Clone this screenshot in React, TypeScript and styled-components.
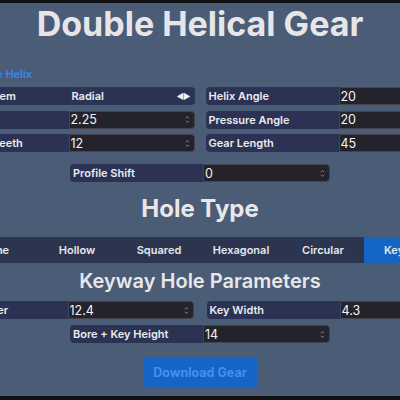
import React, { useState } from "react";
import styled, { createGlobalStyle } from "styled-components";

const GlobalStyle = createGlobalStyle`
    html, body {
        margin: 0;
        padding: 0;
        background: #111214;
    }
    * {
        box-sizing: border-box;
    }
`;

const Screen = styled.div`
    width: 400px;
    height: 400px;
    overflow: hidden;
    background: #111214;
    padding: 3px 0 4px;
`;

const Page = styled.main`
    height: 100%;
    background: #4b5c76;
    display: flex;
    flex-direction: column;
    align-items: center;
    font-family: Inter, "Noto Sans", sans-serif;
    color: #e8e8ea;
`;

const Title = styled.h1`
    margin: 4px 0 0;
    font-size: 34px;
    line-height: 1;
    font-weight: 700;
    color: #e6e6e8;
    white-space: nowrap;
`;

const Board = styled.div`
    width: 540px;
    display: flex;
    flex-direction: column;
    align-items: center;
`;

const ToggleRow = styled.div`
    align-self: stretch;
    margin-top: 21px;
    padding-left: 35px;
`;

const HelixToggle = styled.button`
    border: none;
    background: none;
    padding: 0;
    font-family: inherit;
    font-size: 11px;
    line-height: 14px;
    font-weight: 600;
    color: #3a86ea;
    cursor: pointer;
`;

// left pair carries a wider label; the right margin keeps the inputs on the page centre
const ParamGrid = styled.div<{ $gap: number; $top: number }>`
    margin: ${(p) => p.$top}px 5px 0 0;
    display: grid;
    grid-template-columns: 264px 259px;
    column-gap: ${(p) => p.$gap}px;
    row-gap: 5.5px;
`;

const Pair = styled.div<{ $top?: number }>`
    height: 18px;
    margin-top: ${(p) => p.$top ?? 0}px;
    display: grid;
    grid-template-columns: 133px minmax(0, 1fr);

    ${ParamGrid} > &:nth-child(odd) {
        grid-template-columns: 138px minmax(0, 1fr);
    }
`;

const SinglePair = styled(Pair)`
    width: 260px;
`;

const Label = styled.div`
    background: #2b3253;
    border-radius: 4px 0 0 4px;
    padding-left: 3px;
    font-size: 11px;
    font-weight: 600;
    line-height: 18px;
    color: #ececee;
    white-space: nowrap;
    overflow: hidden;
`;

const Field = styled.div`
    display: flex;
    align-items: center;
    min-width: 0;
    background: #24222b;
    border: 1px solid #44434f;
    border-radius: 0 4px 4px 0;
    padding: 0 4px 0 1px;
`;

const NumberInput = styled.input`
    flex: 1;
    width: 0;
    min-width: 0;
    border: none;
    outline: none;
    background: transparent;
    padding: 0;
    font-family: Inter, "Noto Sans", sans-serif;
    font-size: 12.5px;
    color: #f4f4f6;
`;

const SelectBox = styled.div`
    display: flex;
    align-items: center;
    justify-content: space-between;
    background: #2c3456;
    border-radius: 0 4px 4px 0;
    padding: 0 5px 0 3px;
    font-size: 11px;
    font-weight: 600;
    color: #ececee;
`;

const Arrows = styled.span`
    font-size: 8px;
    letter-spacing: -1px;
    color: #f0f0f2;
`;

const SectionTitle = styled.h2<{ $size: number; $weight: number; $top: number }>`
    margin: ${(p) => p.$top}px 0 0;
    font-size: ${(p) => p.$size}px;
    font-weight: ${(p) => p.$weight};
    line-height: 1;
    color: #e8e8ea;
    white-space: nowrap;
`;

const TabBar = styled.div`
    margin-top: 16px;
    width: 600px;
    height: 26px;
    background: #2c3550;
    display: flex;
    justify-content: center;
`;

const Tab = styled.button<{ $active: boolean }>`
    width: 82px;
    border: none;
    padding: 0;
    background: ${(p) => (p.$active ? "#1565c4" : "transparent")};
    font-family: inherit;
    font-size: 11px;
    font-weight: 600;
    color: #e6e7ea;
    cursor: pointer;
`;

const DownloadButton = styled.button`
    margin-top: 14px;
    width: 115px;
    height: 30px;
    border: none;
    border-radius: 4px;
    background: #1664c6;
    font-family: inherit;
    font-size: 12.5px;
    font-weight: 700;
    color: #4290f2;
    cursor: pointer;
`;

function Spinner() {
    return (
        <svg width="5" height="9" viewBox="0 0 5 9" fill="none" stroke="#8e8e96" strokeWidth="0.9">
            <path d="M1 3.2 L2.5 1.6 L4 3.2" />
            <path d="M1 5.8 L2.5 7.4 L4 5.8" />
        </svg>
    );
}

type FieldProps = { label: string; value: string };

function FieldBody({ label, value }: FieldProps) {
    const [val, setVal] = useState(value);
    return (
        <>
            <Label>{label}</Label>
            <Field>
                <NumberInput value={val} onChange={(e) => setVal(e.target.value)} />
                <Spinner />
            </Field>
        </>
    );
}

function NumberField(props: FieldProps) {
    return (
        <Pair>
            <FieldBody {...props} />
        </Pair>
    );
}

function CenteredField(props: FieldProps & { top: number }) {
    return (
        <SinglePair $top={props.top}>
            <FieldBody label={props.label} value={props.value} />
        </SinglePair>
    );
}

const HOLE_TYPES = ["None", "Hollow", "Squared", "Hexagonal", "Circular", "Keyway"];

export default function App() {
    const [doubleHelix, setDoubleHelix] = useState(true);
    const [holeType, setHoleType] = useState("Keyway");

    return (
        <>
            <GlobalStyle />
            <Screen>
                <Page>
                    <Title>Double Helical Gear</Title>
                    <Board>
                        <ToggleRow>
                            <HelixToggle onClick={() => setDoubleHelix(!doubleHelix)}>
                                {doubleHelix ? "Double Helix" : "Single Helix"}
                            </HelixToggle>
                        </ToggleRow>

                        <ParamGrid $gap={11} $top={5}>
                            <Pair>
                                <Label>Module System</Label>
                                <SelectBox>
                                    Radial
                                    <Arrows>◀▶</Arrows>
                                </SelectBox>
                            </Pair>
                            <NumberField label="Helix Angle" value="20" />
                            <NumberField label="Module" value="2.25" />
                            <NumberField label="Pressure Angle" value="20" />
                            <NumberField label="Number of Teeth" value="12" />
                            <NumberField label="Gear Length" value="45" />
                        </ParamGrid>
                        <CenteredField label="Profile Shift" value="0" top={12} />

                        <SectionTitle $size={24} $weight={700} $top={15}>
                            Hole Type
                        </SectionTitle>
                        <TabBar>
                            {HOLE_TYPES.map((t) => (
                                <Tab key={t} $active={t === holeType} onClick={() => setHoleType(t)}>
                                    {t}
                                </Tab>
                            ))}
                        </TabBar>

                        <SectionTitle $size={20} $weight={600} $top={8}>
                            Keyway Hole Parameters
                        </SectionTitle>
                        <ParamGrid $gap={13} $top={10}>
                            <NumberField label="Bore Diameter" value="12.4" />
                            <NumberField label="Key Width" value="4.3" />
                        </ParamGrid>
                        <CenteredField label="Bore + Key Height" value="14" top={6} />

                        <DownloadButton>Download Gear</DownloadButton>
                    </Board>
                </Page>
            </Screen>
        </>
    );
}
